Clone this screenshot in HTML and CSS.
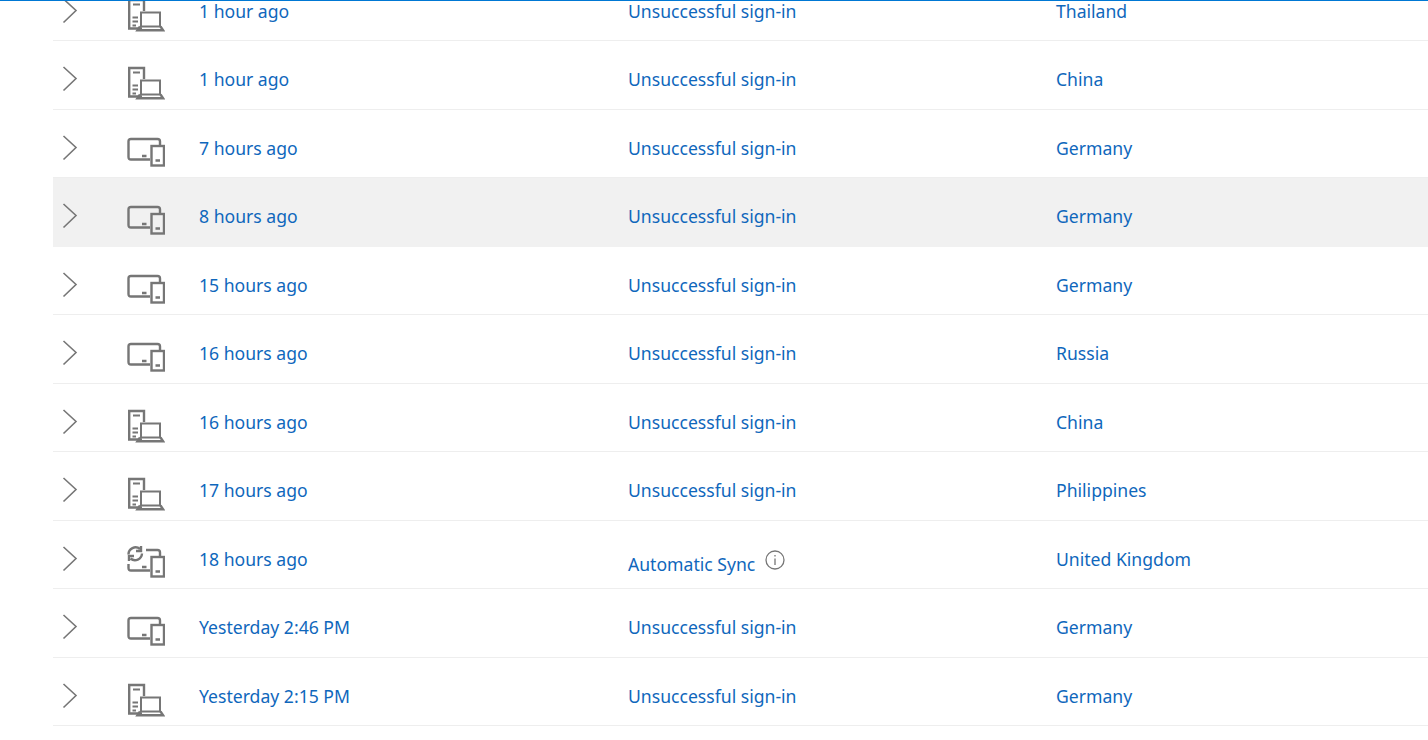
FILE: index.html
```html
<!DOCTYPE html>
<html lang="en">
<head>
<meta charset="utf-8">
<title>Recent activity</title>
<link rel="stylesheet" href="styles.css">
</head>
<body>
<svg class="defs" width="0" height="0" aria-hidden="true">
  <symbol id="chev" viewBox="0 0 16 26"><path d="M1.5 1 L14 12.5 L1.5 24.5" fill="none" stroke="#767676" stroke-width="1.6"/></symbol>
  <symbol id="server" viewBox="0 0 38 36">
    <g fill="none" stroke="#767676" stroke-width="2.4">
      <path d="M15 30.5 H2.2 V2 H17 V13"/>
      <path d="M6 6.5 H13 M5.5 19.5 H11 M5.5 23.5 H11 M5.5 27.5 H9" stroke-width="2"/>
      <rect x="14" y="14.5" width="19" height="14" stroke-width="2"/>
      <path d="M13 28.5 L10.5 32.2 H36 L33.5 28.5"/>
    </g>
  </symbol>
  <symbol id="devices" viewBox="0 0 38 36">
    <g fill="none" stroke="#767676" stroke-width="2.4" transform="translate(0 1.500)">
      <path d="M23 23 H4 Q1.5 23 1.5 20.500 V5 Q1.500 2.500 4 2.500 H30.500 Q33 2.500 33 5 V9"/>
      <rect x="24.500" y="9.500" width="12.500" height="19.500"/>
      <path d="M15 19.500 H19.500 M28.500 24 H33"/>
    </g>
  </symbol>
  <symbol id="sync" viewBox="0 0 38 36">
    <g fill="none" stroke="#767676" stroke-width="2.400" transform="translate(0 1.500)">
      <path d="M1.500 7 A7 7 0 0 1 13 1.500 M15 6 A7 7 0 0 1 3.500 11" stroke-width="2.400"/>
      <path d="M14 -1.500 V3.500 H9 M2 13.500 V8.500 H7" stroke-width="2.400"/>
      <path d="M19 2.500 H30.500 Q33 2.500 33 5 V9 M23 23 H4 Q1.500 23 1.500 20.500 V16.500"/>
      <rect x="24.500" y="9.500" width="12.500" height="19.500"/>
      <path d="M15 19.500 H19.500 M28.500 24 H33"/>
    </g>
  </symbol>
</svg>
<div class="topline"></div>
<main class="list">
  <div class="row"><svg class="chev"><use href="#chev"/></svg><svg class="dev"><use href="#server"/></svg><span class="cell">1 hour ago</span><span class="cell">Unsuccessful sign-in</span><span class="cell">Thailand</span></div>
  <div class="row"><svg class="chev"><use href="#chev"/></svg><svg class="dev"><use href="#server"/></svg><span class="cell">1 hour ago</span><span class="cell">Unsuccessful sign-in</span><span class="cell">China</span></div>
  <div class="row"><svg class="chev"><use href="#chev"/></svg><svg class="dev"><use href="#devices"/></svg><span class="cell">7 hours ago</span><span class="cell">Unsuccessful sign-in</span><span class="cell">Germany</span></div>
  <div class="row hover"><svg class="chev"><use href="#chev"/></svg><svg class="dev"><use href="#devices"/></svg><span class="cell">8 hours ago</span><span class="cell">Unsuccessful sign-in</span><span class="cell">Germany</span></div>
  <div class="row"><svg class="chev"><use href="#chev"/></svg><svg class="dev"><use href="#devices"/></svg><span class="cell">15 hours ago</span><span class="cell">Unsuccessful sign-in</span><span class="cell">Germany</span></div>
  <div class="row"><svg class="chev"><use href="#chev"/></svg><svg class="dev"><use href="#devices"/></svg><span class="cell">16 hours ago</span><span class="cell">Unsuccessful sign-in</span><span class="cell">Russia</span></div>
  <div class="row"><svg class="chev"><use href="#chev"/></svg><svg class="dev"><use href="#server"/></svg><span class="cell">16 hours ago</span><span class="cell">Unsuccessful sign-in</span><span class="cell">China</span></div>
  <div class="row"><svg class="chev"><use href="#chev"/></svg><svg class="dev"><use href="#server"/></svg><span class="cell">17 hours ago</span><span class="cell">Unsuccessful sign-in</span><span class="cell">Philippines</span></div>
  <div class="row"><svg class="chev"><use href="#chev"/></svg><svg class="dev"><use href="#sync"/></svg><span class="cell">18 hours ago</span><span class="cell sync-cell">Automatic Sync<svg class="info" viewBox="0 0 20 20"><circle cx="10" cy="10" r="9" fill="none" stroke="#767676" stroke-width="1.300"/><path d="M10 8.500 V15 M10 5 V6.500" stroke="#767676" stroke-width="1.300"/></svg></span><span class="cell">United Kingdom</span></div>
  <div class="row"><svg class="chev"><use href="#chev"/></svg><svg class="dev"><use href="#devices"/></svg><span class="cell">Yesterday 2:46 PM</span><span class="cell">Unsuccessful sign-in</span><span class="cell">Germany</span></div>
  <div class="row"><svg class="chev"><use href="#chev"/></svg><svg class="dev"><use href="#server"/></svg><span class="cell">Yesterday 2:15 PM</span><span class="cell">Unsuccessful sign-in</span><span class="cell">Germany</span></div>
</main>
</body>
</html>
```
FILE: styles.css
```css
html, body {
  margin: 0;
  height: 100%;
  overflow: hidden;
  background: #fff;
}
.defs {
  position: absolute;
}
.topline {
  position: fixed;
  top: 0;
  left: 0;
  right: 0;
  height: 1px;
  background: #0078d4;
  z-index: 2;
}
.list {
  margin: -27.5px 0 0 53px;
  font-family: "Noto Sans", "Open Sans", sans-serif;
  font-size: 17.6px;
  color: #0f67bc;
}
.row {
  display: grid;
  grid-template-columns: 74px 72px 429px 428px 1fr;
  align-items: center;
  box-sizing: border-box;
  height: 68.5px;
  padding-top: 9px;
  border-bottom: 1px solid #eeeeee;
}
.row.hover {
  background: #f1f1f1;
  border-bottom-color: #f1f1f1;
}
.chev {
  width: 16px;
  height: 26px;
  margin: 0 0 0 9px;
}
.dev {
  width: 38px;
  height: 36px;
  margin-top: 10px;
  overflow: visible;
}
.sync-cell {
  display: flex;
  align-items: flex-start;
  gap: 10px;
  margin-top: 10px;
}
.info {
  width: 20px;
  height: 20px;
  margin-top: -2px;
}
```
